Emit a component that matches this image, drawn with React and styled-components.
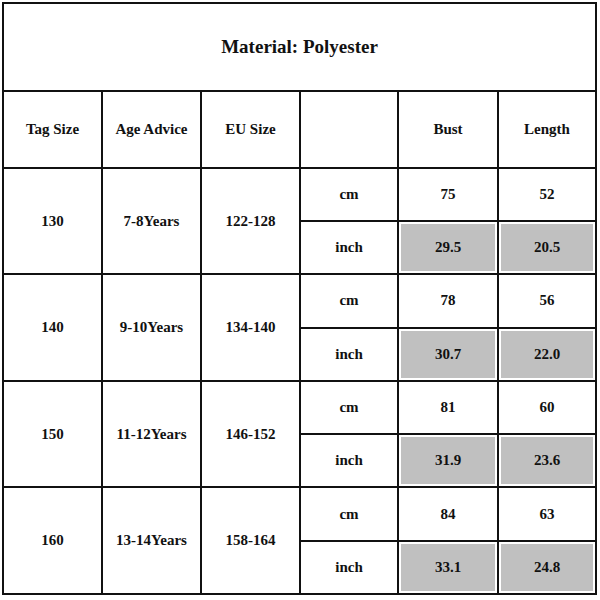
import React from 'react';
import styled, { createGlobalStyle } from 'styled-components';

const GlobalStyle = createGlobalStyle`
    html, body {
        margin: 0;
        padding: 0;
        background: #fff;
    }
`

const Page = styled.div`
    width: 600px;
    height: 600px;
    padding: 2px;
    box-sizing: border-box;
`

const Table = styled.table`
    width: 595px;
    height: 593px;
    border-collapse: collapse;
    table-layout: fixed;
    font-family: "Liberation Serif", "Times New Roman", serif;
    font-weight: 700;
    color: #111;
`

const Col = styled.col`
    width: ${p => p.$w}px;
`

const Cell = styled.td`
    border: 2px solid #111;
    text-align: center;
    vertical-align: middle;
    padding: 0;
    font-size: 15px;
    background: ${p => (p.$shade ? '#c0c0c0' : '#fff')};
    box-shadow: ${p => (p.$shade ? 'inset 0 0 0 2px #fff' : 'none')};
`

const TitleCell = styled(Cell)`
    height: 86px;
    font-size: 19px;
`

const HeadRow = styled.tr`
    height: 76px;
`

const DataRow = styled.tr`
    height: 53px;
`

const widths = [99, 99, 99, 98, 100, 98]

const sizes = [
    { tag: '130', age: '7-8Years', eu: '122-128', cm: ['75', '52'], inch: ['29.5', '20.5'] },
    { tag: '140', age: '9-10Years', eu: '134-140', cm: ['78', '56'], inch: ['30.7', '22.0'] },
    { tag: '150', age: '11-12Years', eu: '146-152', cm: ['81', '60'], inch: ['31.9', '23.6'] },
    { tag: '160', age: '13-14Years', eu: '158-164', cm: ['84', '63'], inch: ['33.1', '24.8'] },
]

const App = () => {
    return (
        <Page>
            <GlobalStyle />
            <Table>
                <colgroup>
                    {widths.map((w, i) => <Col key={i} $w={w} />)}
                </colgroup>
                <tbody>
                    <tr>
                        <TitleCell colSpan={6}>Material: Polyester</TitleCell>
                    </tr>
                    <HeadRow>
                        <Cell>Tag Size</Cell>
                        <Cell>Age Advice</Cell>
                        <Cell>EU Size</Cell>
                        <Cell></Cell>
                        <Cell>Bust</Cell>
                        <Cell>Length</Cell>
                    </HeadRow>
                    {sizes.map(s => (
                        <React.Fragment key={s.tag}>
                            <DataRow>
                                <Cell rowSpan={2}>{s.tag}</Cell>
                                <Cell rowSpan={2}>{s.age}</Cell>
                                <Cell rowSpan={2}>{s.eu}</Cell>
                                <Cell>cm</Cell>
                                <Cell>{s.cm[0]}</Cell>
                                <Cell>{s.cm[1]}</Cell>
                            </DataRow>
                            <DataRow>
                                <Cell>inch</Cell>
                                <Cell $shade>{s.inch[0]}</Cell>
                                <Cell $shade>{s.inch[1]}</Cell>
                            </DataRow>
                        </React.Fragment>
                    ))}
                </tbody>
            </Table>
        </Page>
    )
}

export default App
